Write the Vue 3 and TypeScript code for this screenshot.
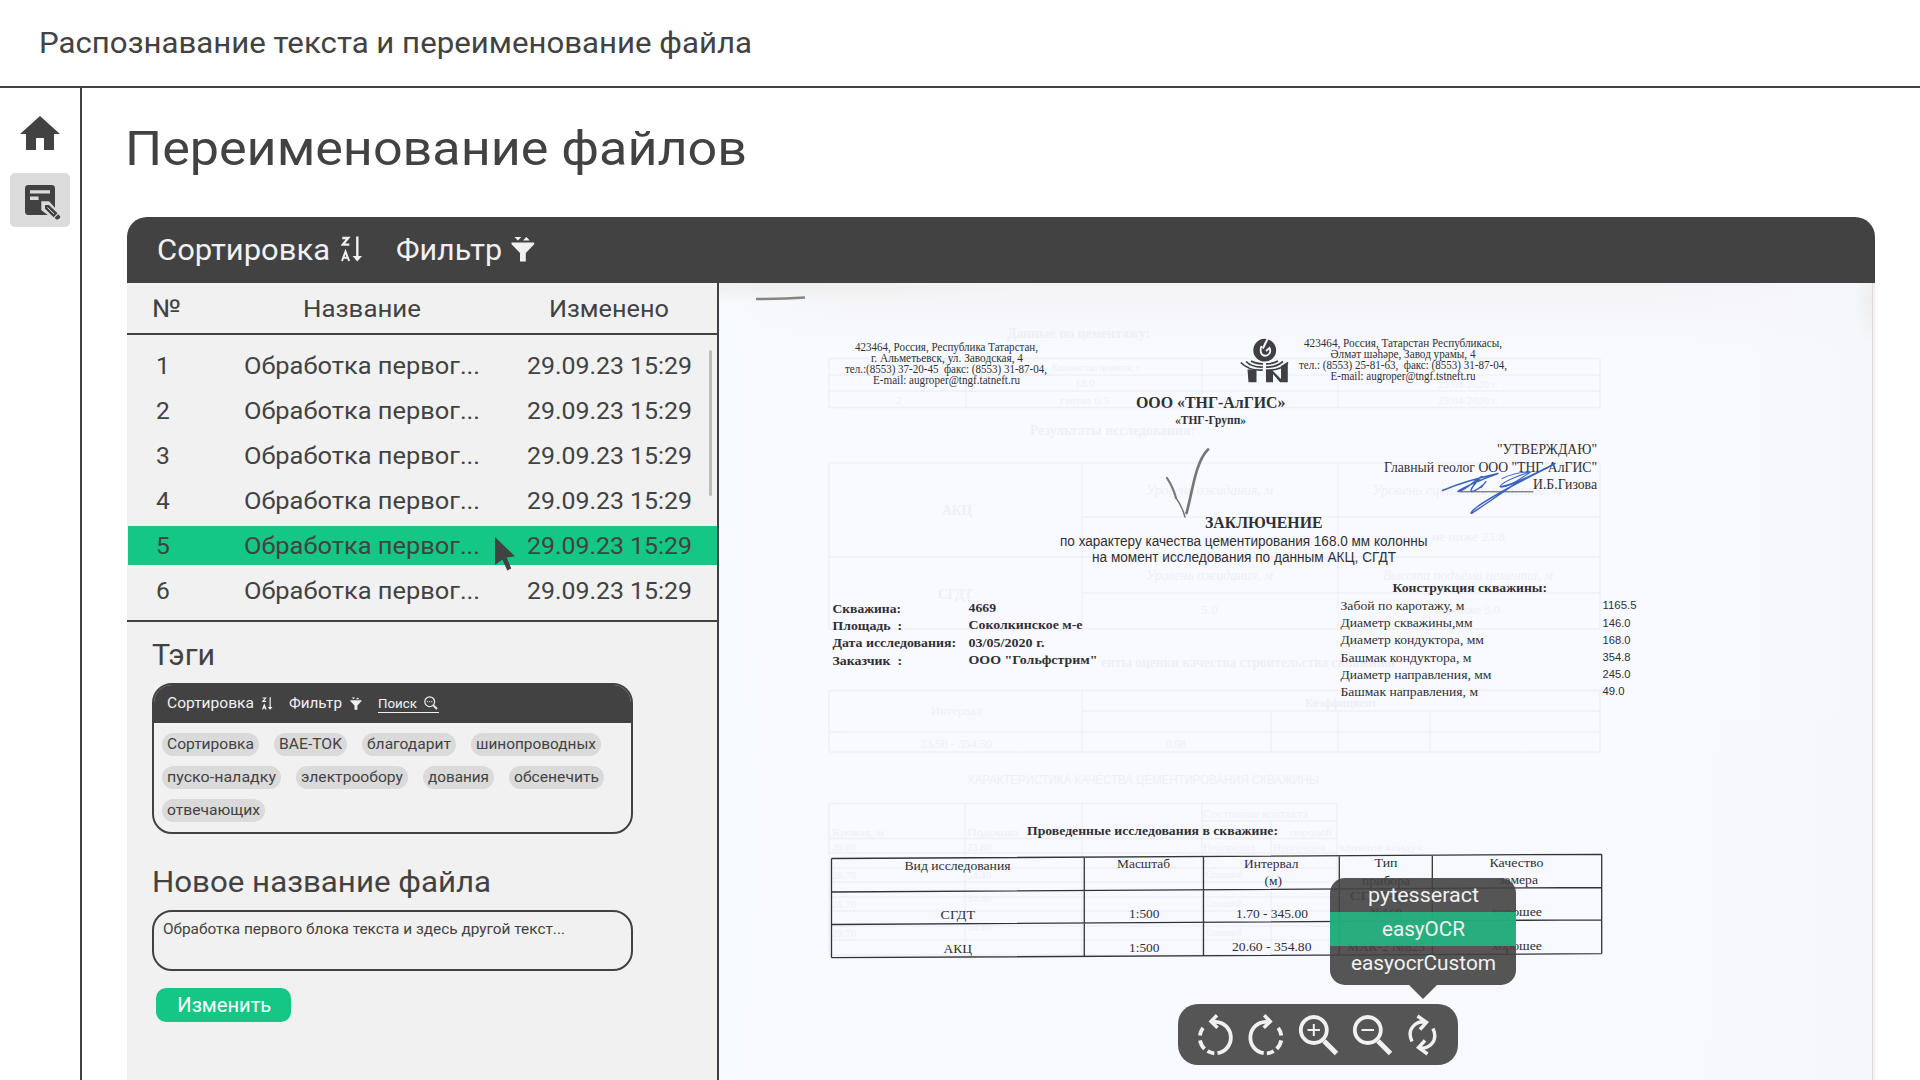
<script setup lang="ts">
import { ref } from 'vue'
import type { Directive } from 'vue'

interface DocLine {
  t: string
  x: number
  y: number
  w: number
  s: number
  b?: boolean
  sans?: boolean
  i?: boolean
}

/* Stretches a label horizontally to its design width. */
const vFit: Directive<HTMLElement, number> = {
  mounted(el, { value }) {
    el.style.display = 'inline-block'
    const natural = el.getBoundingClientRect().width
    if (!natural) return
    el.style.width = `${value}px`
    el.style.transformOrigin = '0 50%'
    el.style.transform = `scaleX(${(value / natural).toFixed(4)})`
  },
}

const rows = ref([1, 2, 3, 4, 5, 6].map((id) => ({ id, name: 'Обработка первог...', date: '29.09.23 15:29' })))
const activeRow = ref(5)

const tags: [string, number][] = [
  ['Сортировка', 87], ['BAE-TOK', 63], ['благодарит', 84], ['шинопроводных', 120],
  ['пуско-наладку', 109], ['электрообору', 102], ['дования', 61], ['обсенечить', 85],
  ['отвечающих', 93],
]

const engines: [string, number][] = [['pytesseract', 111], ['easyOCR', 83], ['easyocrCustom', 145]]
const activeEngine = ref('easyOCR')

const lines: DocLine[] = [
  { t: '423464, Россия, Республика Татарстан,', x: 855, y: 351, w: 183, s: 12 },
  { t: 'г. Альметьевск, ул. Заводская, 4', x: 871, y: 362, w: 152, s: 12 },
  { t: 'тел.:(8553) 37-20-45  факс: (8553) 31-87-04,', x: 845, y: 373, w: 202, s: 12 },
  { t: 'E-mail: augroper@tngf.tatneft.ru', x: 873, y: 384, w: 147, s: 12 },
  { t: '423464, Россия, Татарстан Республикасы,', x: 1304, y: 346.5, w: 198, s: 12 },
  { t: 'Әлмәт шәһәре, Завод урамы, 4', x: 1330.5, y: 357.5, w: 145, s: 12 },
  { t: 'тел.: (8553) 25-81-63,  факс: (8553) 31-87-04,', x: 1299, y: 368.5, w: 208, s: 12 },
  { t: 'E-mail: augroper@tngf.tstneft.ru', x: 1330.5, y: 379.5, w: 145, s: 12 },
  { t: 'ООО «ТНГ-АлГИС»', x: 1136, y: 407.7, w: 149.5, s: 16, b: true },
  { t: '«ТНГ-Групп»', x: 1175, y: 423.5, w: 71, s: 11.5, b: true },
  { t: '"УТВЕРЖДАЮ"', x: 1497, y: 454.4, w: 100, s: 14 },
  { t: 'Главный геолог ООО "ТНГ-АлГИС"', x: 1384, y: 472, w: 213, s: 14 },
  { t: 'И.Б.Гизова', x: 1533, y: 489, w: 64, s: 14 },
  { t: 'ЗАКЛЮЧЕНИЕ', x: 1205, y: 527.6, w: 117.5, s: 16, b: true },
  { t: 'по характеру качества цементирования 168.0 мм колонны', x: 1060, y: 546, w: 367.5, s: 14, sans: true },
  { t: 'на момент исследования по данным АКЦ, СГДТ', x: 1092, y: 562.4, w: 304, s: 14, sans: true },
  { t: 'Скважина:', x: 832.5, y: 612.8, w: 68.5, s: 13.5, b: true },
  { t: 'Площадь  :', x: 832.5, y: 630, w: 69.5, s: 13.5, b: true },
  { t: 'Дата исследования:', x: 832.5, y: 647.3, w: 123.5, s: 13.5, b: true },
  { t: 'Заказчик  :', x: 832.5, y: 664.6, w: 69.5, s: 13.5, b: true },
  { t: '4669', x: 968.5, y: 612.3, w: 27.5, s: 13.5, b: true },
  { t: 'Соколкинское м-е', x: 968.5, y: 629.4, w: 114, s: 13.5, b: true },
  { t: '03/05/2020 г.', x: 968.5, y: 646.6, w: 76, s: 13.5, b: true },
  { t: 'ООО "Гольфстрим"', x: 968.5, y: 663.7, w: 129, s: 13.5, b: true },
  { t: 'Конструкция скважины:', x: 1392.5, y: 592.4, w: 154.5, s: 13.5, b: true },
  { t: 'Забой по каротажу, м', x: 1340.5, y: 609.8, w: 124, s: 13.5 },
  { t: 'Диаметр скважины,мм', x: 1340.5, y: 627, w: 132, s: 13.5 },
  { t: 'Диаметр кондуктора, мм', x: 1340.5, y: 644.4, w: 143.5, s: 13.5 },
  { t: 'Башмак кондуктора, м', x: 1340.5, y: 661.6, w: 131, s: 13.5 },
  { t: 'Диаметр направления, мм', x: 1340.5, y: 678.6, w: 151, s: 13.5 },
  { t: 'Башмак направления, м', x: 1340.5, y: 695.8, w: 137.5, s: 13.5 },
  { t: '1165.5', x: 1602.5, y: 609, w: 34, s: 11.6, sans: true },
  { t: '146.0', x: 1602.5, y: 626.5, w: 28, s: 11.6, sans: true },
  { t: '168.0', x: 1602.5, y: 643.7, w: 28, s: 11.6, sans: true },
  { t: '354.8', x: 1602.5, y: 661, w: 28, s: 11.6, sans: true },
  { t: '245.0', x: 1602.5, y: 678, w: 28, s: 11.6, sans: true },
  { t: '49.0', x: 1602.5, y: 695, w: 22, s: 11.6, sans: true },
  { t: 'Проведенные исследования в скважине:', x: 1027, y: 835, w: 251, s: 13.5, b: true },
  { t: 'Вид исследования', x: 904.5, y: 869.6, w: 106, s: 13.5 },
  { t: 'Масштаб', x: 1117, y: 868.4, w: 53, s: 13.5 },
  { t: 'Интервал', x: 1244, y: 868, w: 54.5, s: 13.5 },
  { t: '(м)', x: 1264.5, y: 885, w: 17.5, s: 13.5 },
  { t: 'Тип', x: 1374.5, y: 867, w: 23, s: 13.5 },
  { t: 'прибора', x: 1362, y: 884.5, w: 48, s: 13.5 },
  { t: 'Качество', x: 1489.5, y: 866.5, w: 54, s: 13.5 },
  { t: 'замера', x: 1499, y: 883.7, w: 39, s: 13.5 },
  { t: 'СГДТ', x: 940.5, y: 919, w: 34.5, s: 13.5 },
  { t: '1:500', x: 1129, y: 918, w: 30.5, s: 13.5 },
  { t: '1.70 - 345.00', x: 1236, y: 917.5, w: 72, s: 13.5 },
  { t: 'СГДТ-НВ', x: 1350, y: 900, w: 66, s: 13.5 },
  { t: '№168', x: 1370, y: 917, w: 32, s: 13.5 },
  { t: 'хорошее', x: 1492, y: 916, w: 50, s: 13.5 },
  { t: 'АКЦ', x: 943.5, y: 953, w: 28.5, s: 13.5 },
  { t: '1:500', x: 1129, y: 951.6, w: 30.5, s: 13.5 },
  { t: '20.60 - 354.80', x: 1232, y: 951, w: 79.5, s: 13.5 },
  { t: 'МАК-2 №825', x: 1347, y: 950.7, w: 78, s: 13.5 },
  { t: 'хорошее', x: 1492, y: 950, w: 50, s: 13.5 },
]

const ghosts: DocLine[] = [
  { t: 'Данные по цементажу:', x: 1007, y: 338, w: 143, s: 14, b: true },
  { t: 'Количество цемента, т', x: 1052, y: 371, w: 88, s: 11 },
  { t: '18.0', x: 1075, y: 387, w: 20, s: 11 },
  { t: '2', x: 895, y: 403.5, w: 7, s: 11 },
  { t: 'гипан 0.5', x: 1060, y: 403.5, w: 50, s: 11 },
  { t: '29/04/2020 г.', x: 1438, y: 387.5, w: 60, s: 11 },
  { t: '29/04/2020 г.', x: 1438, y: 403.5, w: 60, s: 11 },
  { t: 'Результаты исследования:', x: 1030, y: 435, w: 165, s: 14, b: true },
  { t: 'Уровень ожидания, м', x: 1146, y: 495, w: 127, s: 14, i: true },
  { t: 'Уровень сцепления цемента, м', x: 1372, y: 495, w: 190, s: 14, i: true },
  { t: 'АКЦ', x: 942, y: 515, w: 30, s: 14, b: true },
  { t: 'не ниже 23.8', x: 1432, y: 541, w: 73, s: 13 },
  { t: 'Уровень ожидания, м', x: 1146, y: 580, w: 127, s: 14, i: true },
  { t: 'Высота подъёма цемента, м', x: 1383, y: 580, w: 170, s: 14, i: true },
  { t: 'СГДТ', x: 938, y: 599, w: 35, s: 14, b: true },
  { t: '5.0', x: 1201, y: 614, w: 17, s: 13 },
  { t: 'не ниже 5.0', x: 1438, y: 614, w: 62, s: 13 },
  { t: 'енты оценки качества строительства скважины', x: 1101, y: 667, w: 294, s: 14, b: true },
  { t: 'Интервал', x: 931, y: 715, w: 51, s: 12 },
  { t: 'Коэффициент', x: 1305, y: 707, w: 72, s: 12, b: true },
  { t: '23.50 - 354.50', x: 920, y: 748, w: 72, s: 12 },
  { t: '0.98', x: 1166, y: 748, w: 20, s: 12 },
  { t: 'ХАРАКТЕРИСТИКА КАЧЕСТВА ЦЕМЕНТИРОВАНИЯ СКВАЖИНЫ', x: 967, y: 784, w: 352, s: 13, sans: true },
  { t: 'Состояние контакта', x: 1203, y: 818, w: 105, s: 11.5 },
  { t: 'Кровля, м', x: 832, y: 836, w: 52, s: 11 },
  { t: 'Подошва', x: 967, y: 836, w: 52, s: 11 },
  { t: 'породой', x: 1290, y: 836, w: 42, s: 11 },
  { t: '20.60', x: 832, y: 850.5, w: 24, s: 11 },
  { t: '23.80', x: 967, y: 850.5, w: 24, s: 11 },
  { t: 'Неопредел', x: 1203, y: 850.5, w: 52, s: 11 },
  { t: 'Неопредел', x: 1273, y: 850.5, w: 52, s: 11 },
  { t: 'влияние кондук', x: 1339, y: 850.5, w: 84, s: 11 },
]
for (const y of [879, 908, 937]) {
  ghosts.push({ t: '28.70', x: 832, y, w: 24, s: 10.5 }, { t: '34.40', x: 967, y: y - (y > 890 ? 6 : 0), w: 24, s: 10.5 })
}
for (const y of [879, 908, 937]) {
  ghosts.push({ t: 'Сплошной', x: 1206, y: y - 1, w: 36, s: 10.5 })
}

const ghostGrid =
  'M829 358.5H1600M829 375H1600M829 391H1600M829 407.5H1600M829 358V408M966 358V408M1202 358V408M1338 358V408M1600 358V408' +
  'M829 463H1600M1082 517H1600M829 557H1600M1082 593H1600M829 629H1600M829 463V629M1082 463V629M1338 463V629M1600 463V629' +
  'M829 690.5H1600M1082 711H1600M829 732H1600M829 752H1600M829 690V752M1082 690V752M1271 711V752M1338 711V752M1430 711V752M1600 690V752' +
  'M829 803.5H1337M1202 821H1337M829 838.5H1337M829 853H1337M829 868H1337M829 882H1337M829 897H1337M829 911H1337M829 926H1337M829 940H1337M829 955H1337' +
  'M829 803V957M965 803V957M1082 803V957M1202 803V957M1271 821V957M1337 803V957'

const tableGrid =
  'M831.5 858.5L1601.7 854.3M831.5 892L1601.7 887.5M831.5 924.5L1601.7 919.8M831.5 957.7L1601.7 953.7' +
  'M831.5 858.5V957.7M1084.3 857.3V956.3M1203.5 856.5V955.7M1339.3 855.7V955M1432.3 855.2V954.5M1601.7 854.3V953.7'
</script>

<template>
  <div class="app">
    <header class="topbar">
      <span v-fit="713" class="brand">Распознавание текста и переименование файла</span>
    </header>
    <div class="shell">
      <nav class="sidebar">
        <a class="nav-item">
          <svg width="40" height="34" viewBox="0 0 40 34"><path d="M20 0 40 18H34V34H24V22H16V34H6V18H0Z" fill="#424242" /></svg>
        </a>
        <a class="nav-item nav-active">
          <svg width="36" height="36" viewBox="0 0 36 36">
            <rect x="0" y="0" width="30" height="30" rx="3.4" fill="#424242" />
            <path d="M5 5.2H25V8.4H5ZM5 11.6H13.6V15H5Z" fill="#dcdcdc" />
            <path d="M16.3 16.3H24L31 24V31H24L16.3 25Z" fill="#dcdcdc" />
            <path d="M20 20H24L32.5 28.3 28.6 32.2 20 23.8ZM33.2 29.2 35.2 31.2Q35.6 32.6 34.4 33.6 33 35 31.4 34.4L29.6 32.8Z" fill="#424242" />
            <path d="M22.5 22.5 29 29" stroke="#dcdcdc" stroke-width="1" />
          </svg>
        </a>
      </nav>
      <main class="content">
        <h1><span v-fit="622">Переименование файлов</span></h1>
        <section class="panel">
          <div class="panel-bar">
            <span v-fit="173">Сортировка</span>
            <svg class="ic-sort" width="22" height="26" viewBox="0 0 22 26">
              <path d="M1.3 2H7.2L1.8 8.6H8.3" fill="none" stroke="#f1f1f1" stroke-width="2.3" />
              <path d="M1 25 4.5 15.6 8.1 25M2.4 21.8H6.8" fill="none" stroke="#f1f1f1" stroke-width="2" />
              <path d="M16.3.5V22" stroke="#f1f1f1" stroke-width="2.4" /><path d="M11.6 20H21L16.3 25.4Z" fill="#f1f1f1" />
            </svg>
            <span v-fit="106" class="filter-label">Фильтр</span>
            <svg class="ic-filter" width="24" height="26" viewBox="0 0 24 26" fill="#f1f1f1">
              <path d="M3.5 1H10.3L6.9 4.6ZM12 4.6 15.3 1 18.8 4.6ZM.5 6.6H23.2V8.2L14.8 17V25.6H9V17L.5 8.2Z" />
            </svg>
          </div>
          <div class="panel-body">
            <div class="left">
              <div class="thead">
                <span v-fit="29">№</span><span v-fit="118">Название</span><span v-fit="120">Изменено</span>
              </div>
              <div class="list">
                <div v-for="r in rows" :key="r.id" class="row" :class="{ selected: r.id === activeRow }">
                  <span>{{ r.id }}</span><span><b v-fit="236">{{ r.name }}</b></span><span><b v-fit="165">{{ r.date }}</b></span>
                </div>
                <i class="scroll"></i>
                <svg class="cursor" width="21" height="35" viewBox="0 0 21 35"><path d="M0 0 20 19.3 11.7 20.6 16.3 31.6 12.3 33.4 7.4 22.6 0 28Z" fill="#424242" /></svg>
              </div>
              <div class="form">
                <h2><span v-fit="63">Тэги</span></h2>
                <div class="tagbox">
                  <div class="tagbar">
                    <span v-fit="87">Сортировка</span>
                    <svg class="t-sort" width="11" height="13" viewBox="0 0 22 26">
                      <path d="M1.3 2H7.2L1.8 8.6H8.3M1 25 4.5 15.6 8.1 25M2.4 21.8H6.8" fill="none" stroke="#f1f1f1" stroke-width="2.3" />
                      <path d="M16.3.5V22" stroke="#f1f1f1" stroke-width="2.4" /><path d="M11.6 20H21L16.3 25.4Z" fill="#f1f1f1" />
                    </svg>
                    <span v-fit="53" class="t-filter">Фильтр</span>
                    <svg class="t-funnel" width="12" height="13" viewBox="0 0 24 26" fill="#f1f1f1">
                      <path d="M3.5 1H10.3L6.9 4.6ZM12 4.6 15.3 1 18.8 4.6ZM.5 6.6H23.2V8.2L14.8 17V25.6H9V17L.5 8.2Z" />
                    </svg>
                    <span class="search">
                      <span v-fit="39">Поиск</span>
                      <svg width="14" height="14" viewBox="0 0 14 14" fill="none" stroke="#f1f1f1"><circle cx="5.7" cy="5.7" r="4.9" stroke-width="1.2" /><path d="M9.4 9.4 13 13" stroke-width="1.9" /><path d="M2.8 5.7H8.7" stroke-dasharray="1.2 1" /></svg>
                    </span>
                  </div>
                  <div class="tags">
                    <span v-for="[t, w] in tags" :key="t" class="tag" :style="{ width: `${w}px` }"><b v-fit="w">{{ t }}</b></span>
                  </div>
                </div>
                <h2 class="h2-name"><span v-fit="339">Новое название файла</span></h2>
                <div class="field"><span v-fit="402">Обработка первого блока текста и здесь другой текст...</span></div>
                <button class="submit"><span v-fit="94">Изменить</span></button>
              </div>
            </div>

            <div class="viewer">
              <svg class="scan" width="1156" height="797" viewBox="719 283 1156 797">
                <defs>
                  <linearGradient id="paper" x1="0" y1="0" x2="0" y2="1">
                    <stop offset="0" stop-color="#f4f4f7" /><stop offset=".09" stop-color="#f9faff" /><stop offset="1" stop-color="#f8f9fe" />
                  </linearGradient>
                  <linearGradient id="edge" x1="0" y1="0" x2="1" y2="0">
                    <stop offset="0" stop-color="#f6f9ff" /><stop offset=".12" stop-color="#f6f9ff" stop-opacity="0" />
                    <stop offset=".8" stop-color="#f6f7fc" stop-opacity="0" /><stop offset="1" stop-color="#f6f7fc" />
                  </linearGradient>
                  <radialGradient id="corner">
                    <stop offset="0" stop-color="#eeeeec" /><stop offset="1" stop-color="#eeeeec" stop-opacity="0" />
                  </radialGradient>
                </defs>
                <rect x="719" y="283" width="1156" height="797" fill="url(#paper)" />
                <rect x="719" y="283" width="1156" height="797" fill="url(#edge)" />
                <ellipse cx="780" cy="283" rx="260" ry="20" fill="url(#corner)" />
                <ellipse cx="1872" cy="300" rx="18" ry="46" fill="url(#corner)" />
                <path d="M1872.5 283V1080" stroke="#dcdde0" /><path d="M1874 283V1080" stroke="#f4efee" stroke-width="2" />
                <path d="M756 299Q785 299 805 297.5" stroke="#86867f" stroke-width="2.4" fill="none" />

                <path :d="ghostGrid" class="ghost-grid" />
                <text v-for="(l, i) in ghosts" :key="`g${i}`" class="ghost" :class="{ bold: l.b, sans: l.sans, ital: l.i }" :x="l.x" :y="l.y" :font-size="l.s" :textLength="l.w" lengthAdjust="spacingAndGlyphs">{{ l.t }}</text>

                <path :d="tableGrid" stroke="#333338" stroke-width="1.3" fill="none" />
                <text v-for="(l, i) in lines" :key="i" class="ink" :class="{ bold: l.b, sans: l.sans }" :x="l.x" :y="l.y" :font-size="l.s" :textLength="l.w" lengthAdjust="spacingAndGlyphs">{{ l.t }}</text>

                <g fill="#3f3f44">
                  <circle cx="1264.7" cy="350.2" r="11.4" />
                  <path d="M1268.5 337 1262.8 348.500" stroke="#f9faff" stroke-width="2" />
                  <path d="M1261.500 346Q1259.500 351 1262 354.500 1266 357.500 1269.500 353.500 1271 350.500 1269.500 348L1266 351" fill="none" stroke="#f9faff" stroke-width="1.800" />
                  <path d="M1247.500 369.500H1256.500V382.300H1248.500ZM1266 370H1272L1281 379V366L1287.800 362V382.300H1280L1273 374V382.300H1266Z" />
                </g>
                <path d="M1240.800 362.500Q1249 371 1263 370M1246 361.500Q1252 367.500 1263 367M1251 361Q1256 364 1263 363.800M1288 362.500Q1280 371 1266 370M1283 361.500Q1276 367.500 1266 367M1278 361Q1273 364 1266 363.800" fill="none" stroke="#3f3f44" stroke-width="1.700" />

                <g fill="none" stroke-linecap="round" stroke-linejoin="round">
                  <path d="M1167 478Q1173 487 1176 498" stroke="#77777a" stroke-width="2.200" />
                  <path d="M1176 498Q1182 506 1185 517" stroke="#77777a" stroke-width="1.500" />
                  <path d="M1186.500 513C1192 495 1195 462 1208 449.500" stroke="#77777a" stroke-width="2.700" />
                  <path d="M1460 491.800H1533" stroke="#555" stroke-width="1" />
                  <path d="M1442.500 490.500C1460 483 1478 478 1498 473.500C1482 479 1460 489 1458 491.500C1464 492 1477 478 1482 476.500C1477 481 1468 491 1472 491.500C1476 491 1484 485 1486 481.500M1481 487.500 1482.500 486" stroke="#3b62bd" stroke-width="1.400" />
                  <path d="M1502 478.500C1512 474 1522 471.500 1531 472C1522 474 1502 482 1500 486.500C1507 489 1521 478 1530 472.500" stroke="#4268c2" stroke-width="1.100" />
                  <path d="M1500.500 486.800C1515 485 1542 470 1555 463.500C1532 476 1498 492 1477 507C1470 512 1469 516 1475 511C1491 501 1505 490 1521 480" stroke="#3b62bd" stroke-width="1.500" />
                </g>
              </svg>

              <div class="popover">
                <div v-for="[name, w] in engines" :key="name" class="engine" :class="{ on: name === activeEngine }"><span v-fit="w">{{ name }}</span></div>
              </div>
              <i class="tip"></i>

              <div class="tools">
                <svg width="280" height="61" viewBox="0 0 280 61" fill="none" stroke="#f1f1f1" stroke-width="3.800">
                  <defs>
                    <g id="rotate">
                      <path d="M33 17.800H37.500A15.800 15.800 0 0 1 39.500 49.200" />
                      <path d="M39 11.300 33 17.500 39.500 23.800" stroke-width="3.500" />
                      <path d="M36.300 49.300A15.800 15.800 0 0 1 29.500 47.200M26.500 44.800A15.800 15.800 0 0 1 22 36.300M21.900 31.500A15.800 15.800 0 0 1 25 23.800" />
                    </g>
                  </defs>
                  <use href="#rotate" />
                  <use href="#rotate" transform="matrix(-1 0 0 1 125.200 0)" />
                  <circle cx="135.800" cy="26" r="13" /><path d="M146 37 158.500 49.500" stroke-width="5" /><path d="M129.500 26H142M135.800 20V32" stroke-width="2" />
                  <circle cx="189.800" cy="26" r="13" /><path d="M200 37 212.500 49.500" stroke-width="5" /><path d="M183.500 26H196" stroke-width="2" />
                  <path d="M234 37.500C228 25 238 16.500 248 18M239.500 12 248.500 18.300 242 25.500M255 24.500C261 38 250 45.500 241 43.800M249.500 50 240.500 43.500 247 36.500" stroke-width="3.400" />
                </svg>
              </div>
            </div>
          </div>
        </section>
      </main>
    </div>
  </div>
</template>

<style>
body { margin: 0; overflow: hidden; background: #fff; }
</style>

<style scoped>
.app { width: 1920px; height: 1080px; display: flex; flex-direction: column; overflow: hidden; font-family: Roboto, "Open Sans", sans-serif; color: #424242; background: #fff; }
.app * { box-sizing: border-box; }
b { font-weight: 400; }
span, b { white-space: nowrap; }
.topbar { height: 88px; flex: none; border-bottom: 2px solid #424242; display: flex; align-items: center; padding-left: 39px; }
.brand { font-size: 29.5px; }
.shell { flex: 1; display: flex; min-height: 0; }
.sidebar { width: 82px; flex: none; border-right: 2px solid #424242; display: flex; flex-direction: column; align-items: center; padding-top: 28px; gap: 23px; }
.nav-item { display: flex; width: 60px; justify-content: center; }
.nav-item svg { display: block; }
.nav-active { height: 54px; justify-content: flex-start; padding: 12px 0 0 15px; background: #dcdcdc; border-radius: 5px; }
.content { flex: 1; display: flex; flex-direction: column; padding: 33px 45px 0 45px; min-width: 0; }
h1 { margin: 0; height: 56px; line-height: 56px; font-size: 48px; font-weight: 400; display: flex; margin-left: -2px; }
.panel { margin-top: 40px; flex: 1; display: flex; flex-direction: column; border-radius: 20px 20px 0 0; overflow: hidden; min-height: 0; }
.panel-bar { height: 66px; flex: none; background: #424242; color: #f1f1f1; font-size: 29.5px; display: flex; align-items: center; padding-left: 30px; }
.ic-sort { margin: -2px 0 0 11px; }
.filter-label { margin-left: 33px; }
.ic-filter { margin: -2px 0 0 9px; }
.panel-body { flex: 1; display: flex; min-height: 0; }
.left { width: 592px; flex: none; background: #f1f1f1; border-right: 2px solid #424242; display: flex; flex-direction: column; }
.thead { height: 52px; flex: none; border-bottom: 2px solid #424242; display: grid; grid-template-columns: 151px 246px 1fr; justify-items: start; align-items: center; padding-left: 25px; font-size: 24.600px; }
.list { position: relative; height: 287px; flex: none; border-bottom: 2px solid #424242; padding: 11px 0 0 1px; display: flex; flex-direction: column; gap: 6px; font-size: 24.600px; }
.row { height: 39px; flex: none; display: grid; grid-template-columns: 88px 283px 1fr; align-items: center; padding-left: 28px; }
.selected { background: #15c784; }
.scroll { position: absolute; left: 582px; top: 15px; width: 3px; height: 146px; border-radius: 2px; background: #bdbdbd; }
.cursor { position: absolute; left: 368px; top: 202px; }
.form { padding: 15px 0 0 25px; display: flex; flex-direction: column; align-items: flex-start; }
h2 { margin: 0; height: 36px; line-height: 36px; font-size: 29.500px; font-weight: 400; display: flex; }
.tagbox { margin-top: 10px; width: 481px; height: 151px; border: 2px solid #424242; border-radius: 20px; overflow: hidden; }
.tagbar { height: 38px; background: #424242; color: #f1f1f1; font-size: 14.700px; display: flex; align-items: center; padding: 0 0 2px 13px; }
.t-sort { margin-left: 8px; }
.t-filter { margin-left: 16px; }
.t-funnel { margin-left: 8px; }
.search { margin-left: 16px; width: 61px; height: 19px; margin-top: 1px; border-bottom: 1px solid #f1f1f1; display: flex; align-items: center; justify-content: space-between; font-size: 12.800px; padding-right: 1px; }
.tags { padding: 10px 8px; display: flex; flex-wrap: wrap; gap: 10px 15px; }
.tag { box-sizing: content-box !important; padding: 0 5px; height: 23px; line-height: 23px; border-radius: 11.500px; background: #dadada; font-size: 14.700px; display: flex; }
.h2-name { margin-top: 30px; }
.field { margin-top: 10px; width: 481px; height: 61px; border: 2px solid #424242; border-radius: 20px; padding: 8px 9px; font-size: 14.700px; line-height: 18px; }
.submit { margin: 17px 0 0 4px; width: 135px; height: 34px; border: 0; border-radius: 10px; background: #15c784; color: #fff; font: 20px Roboto, sans-serif; display: flex; align-items: center; justify-content: center; padding: 0; }
.viewer { position: relative; flex: 1; overflow: hidden; }
.scan { display: block; }
.ghost-grid { fill: none; stroke: #eff0f7; stroke-width: 1.500; }
.ghost, .ink { font-family: "Liberation Serif", serif; white-space: pre; }
.ghost { fill: #eeeff6; }
.ink { fill: #303034; }
.bold { font-weight: 700; }
.ital { font-style: italic; }
.sans { font-family: "Liberation Sans", sans-serif; }
.popover { position: absolute; left: 611px; top: 595px; width: 186px; height: 107px; border-radius: 15px; background: rgba(67, 67, 67, .9); overflow: hidden; color: #f1f1f1; font-size: 20px; }
.engine { height: 34px; display: flex; align-items: center; justify-content: center; }
.on { background: rgba(26, 203, 141, .75); }
.tip { position: absolute; left: 690px; top: 702px; width: 28px; height: 14px; background: rgba(67, 67, 67, .9); clip-path: polygon(0 0, 100% 0, 50% 100%); }
.tools { position: absolute; left: 459px; top: 721px; width: 280px; height: 61px; border-radius: 20px; background: rgba(67, 67, 67, .9); }
</style>
